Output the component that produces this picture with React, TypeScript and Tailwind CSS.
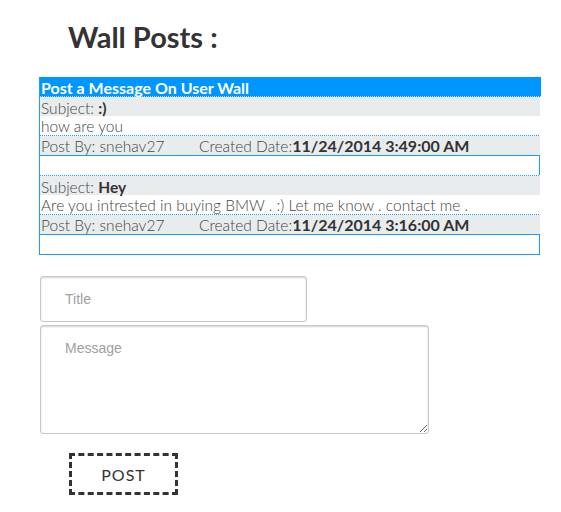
const posts = [
  { subject: ':)', body: 'how are you', by: 'snehav27', date: '11/24/2014 3:49:00 AM' },
  {
    subject: 'Hey',
    body: 'Are you intrested in buying BMW . :) Let me know . contact me .',
    by: 'snehav27',
    date: '11/24/2014 3:16:00 AM',
  },
];

function Dots({ light }: { light?: boolean }) {
  return (
    <div
      className={
        light
          ? 'h-[1px] bg-[#0096ff] bg-[repeating-linear-gradient(to_right,#9fd4f8_0_1px,transparent_1px_2px)]'
          : 'h-[1px] mr-[1px] bg-[repeating-linear-gradient(to_right,#1e9bff_0_1px,transparent_1px_2px)]'
      }
    />
  );
}

function App() {
  return (
    <div className="w-[561px] h-[512px] bg-white font-['Lato','Liberation_Sans',sans-serif] text-[#333]">
      <h1 className="pl-[68px] pt-[20px] text-[29px] leading-[34px] font-bold text-[#333]">Wall Posts :</h1>

      {/* wall table */}
      <div className="ml-[39px] mt-[23px] w-[502px] border-l border-l-[#1e9bff]">
        <div className="h-[19px] bg-[#0096ff] text-[16px] leading-[21px] font-bold text-white pl-[1px]">
          Post a Message On User Wall
        </div>
        <Dots light />
        {posts.map((p, i) => (
          <div key={i}>
            <div className="h-[19px] bg-[#e9eced] text-[15.5px] leading-[22px] font-light text-[#444] pl-[1px] mr-[1px]">
              Subject: <span className="font-bold text-[#333]">{p.subject}</span>
            </div>
            <div className="h-[19px] text-[15.5px] leading-[21px] font-light text-[#444] pl-[1px] whitespace-nowrap overflow-hidden">
              {p.body}
            </div>
            <Dots />
            <div className="h-[19px] bg-[#e9eced] text-[15.5px] leading-[20px] font-light text-[#444] pl-[1px] mr-[1px] flex">
              <span className="w-[158px]">Post By: {p.by}</span>
              <span>
                Created Date:<span className="text-[16px] font-bold text-[#333]">{p.date}</span>
              </span>
            </div>
            {i === 0 ? (
              <>
                <div className="h-[20px] mr-[1px] border-t border-r border-[#1e9bff]" />
                <Dots />
              </>
            ) : (
              <div className="h-[21px] mr-[1px] border-t border-r border-b border-[#1e9bff]" />
            )}
          </div>
        ))}
      </div>

      {/* form */}
      <div className="ml-[40px] mt-[21px] flex flex-col gap-[3px]">
        <input
          placeholder="Title"
          className="w-[267px] h-[46px] rounded-[3px] border border-[#c8c8c8] shadow-[inset_0_1px_2px_rgba(0,0,0,0.18)] pl-[24px] text-[14px] font-['Liberation_Sans',Arial,sans-serif] placeholder:text-[#a0a0a0] outline-none"
        />
        <textarea
          placeholder="Message"
          className="w-[389px] h-[109px] rounded-[3px] border border-[#c8c8c8] shadow-[inset_0_1px_2px_rgba(0,0,0,0.18)] pl-[24px] pt-[12px] text-[14px] font-['Liberation_Sans',Arial,sans-serif] placeholder:text-[#a0a0a0] outline-none resize"
        />
      </div>

      <button className="ml-[69px] mt-[19px] w-[109px] h-[42px] pt-[2px] border-[3px] border-dashed border-[#333] text-[16px] tracking-[1px] text-[#333] bg-white">
        POST
      </button>
    </div>
  );
}

export default App;
